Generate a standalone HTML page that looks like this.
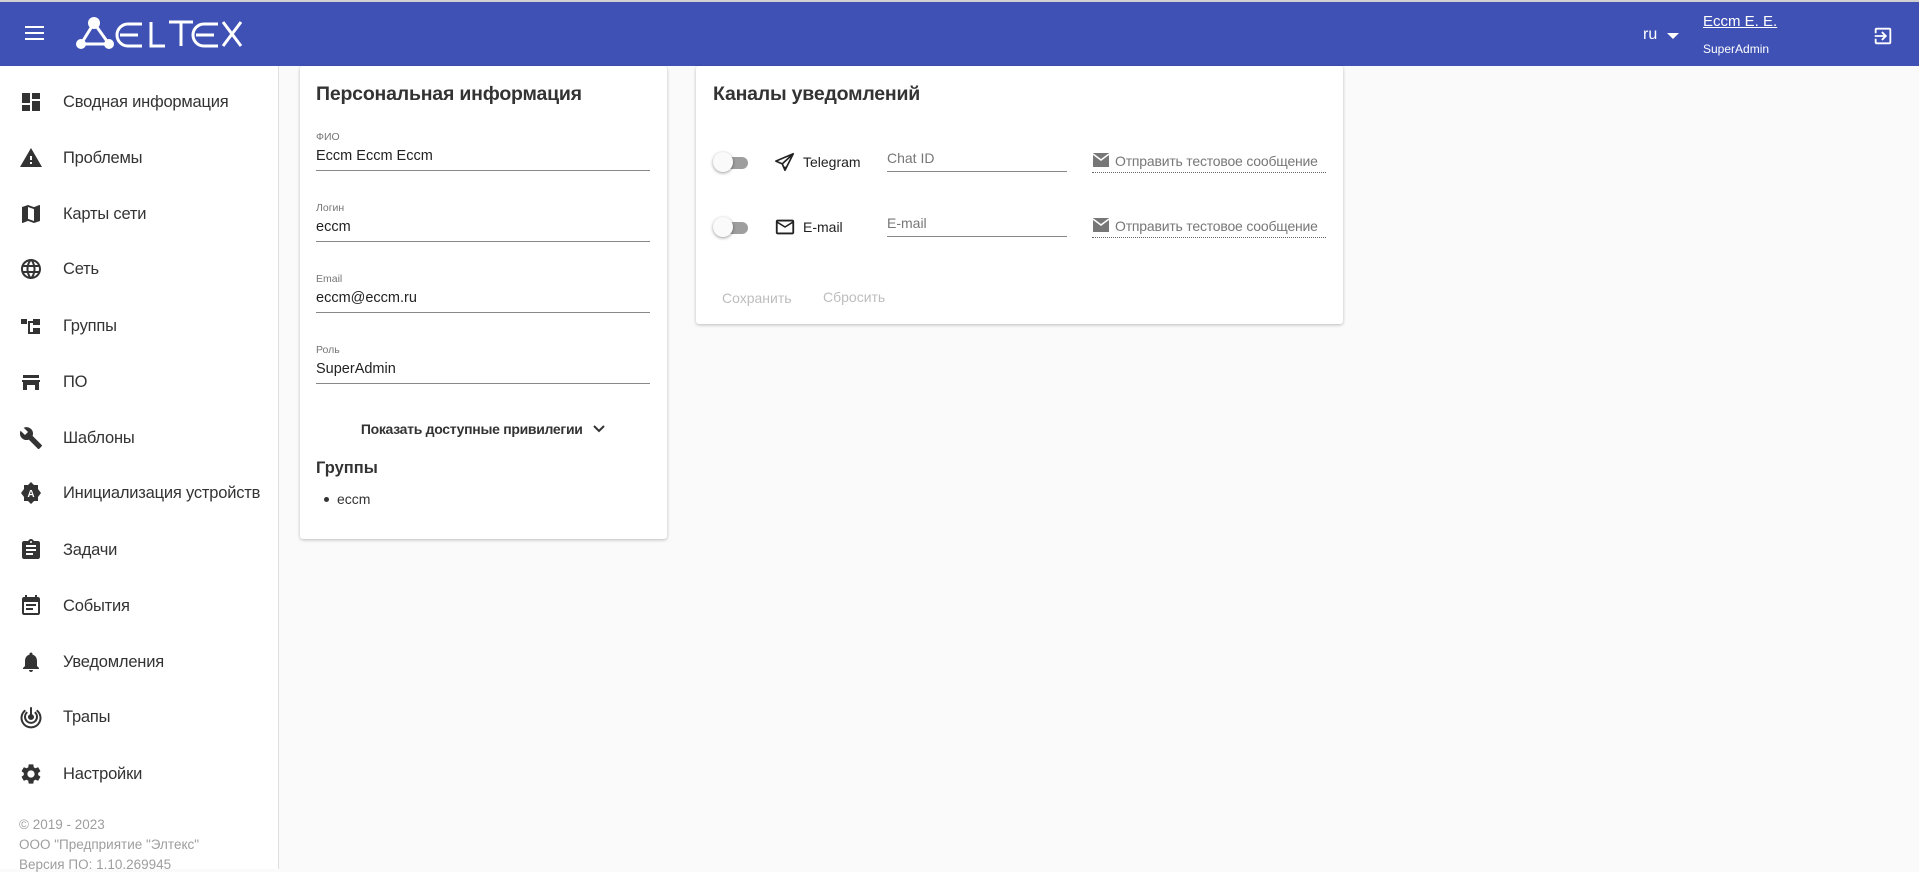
<!DOCTYPE html>
<html><head><meta charset="utf-8"><style>
*{box-sizing:border-box;margin:0;padding:0}
body{width:1919px;height:869px;overflow:hidden;background:#fafafa;font-family:"Liberation Sans",sans-serif;color:#212121;position:relative}
.hdr{position:absolute;left:0;top:0;width:1919px;height:66px;background:#3f51b5;border-top:2px solid #d0d0d0}
.side{position:absolute;left:0;top:66px;width:279px;height:803px;background:#fff;border-right:1px solid #e0e0e0}
.it{position:absolute;left:0;height:40px;width:279px}
.it svg{position:absolute;left:19px;top:8px;width:24px;height:24px;fill:#333}
.it span{position:absolute;left:63px;top:11px;font-size:16.5px;color:#333;letter-spacing:-0.2px}
.foot{position:absolute;left:19px;font-size:13.5px;color:#9e9e9e}
.card{position:absolute;background:#fff;box-shadow:0 1px 3px rgba(0,0,0,.25);border-radius:3px}
.t{position:absolute;font-size:19.5px;font-weight:bold;color:#333;letter-spacing:-0.2px}
.lab{position:absolute;font-size:10.5px;color:#757575}
.val{position:absolute;font-size:14.5px;color:#222}
.ln{position:absolute;height:1px;background:#888}
.a{position:absolute;font-size:14px;color:#777;letter-spacing:-0.2px}
</style></head><body>
<div class="hdr">
<svg style="position:absolute;left:25px;top:23px" width="20" height="16" viewBox="0 0 20 16"><rect y="1" width="19" height="2" fill="#fff"/><rect y="7" width="19" height="2" fill="#fff"/><rect y="13" width="19" height="2" fill="#fff"/></svg>
<svg style="position:absolute;left:76px;top:14px" width="170" height="36" viewBox="0 0 170 36">
<g fill="#fff"><circle cx="18" cy="7" r="6"/><circle cx="5" cy="28" r="5"/><circle cx="33" cy="28" r="5"/></g>
<g stroke="#fff" stroke-width="3" fill="none"><path d="M18 7 L5 28 M18 7 L33 28 M5 28 L33 28"/>
<path d="M66 8 h-14 a11 11 0 0 0 0 22 h14 M44 19 h18"/>
<path d="M75 6 v24 h14"/><path d="M93 6 h24 M105 6 v24"/>
<path d="M142 8 h-14 a11 11 0 0 0 0 22 h14 M120 19 h18"/>
<path d="M147 6 l18 24 M165 6 l-18 24"/></g></svg>
<div style="position:absolute;left:1643px;top:24px;color:#fff;font-size:16px">ru</div>
<svg style="position:absolute;left:1667px;top:31px" width="12" height="7"><path d="M0 0h12L6 6z" fill="#fff"/></svg>
<div style="position:absolute;left:1703px;top:11px;color:#fff;font-size:15px;text-decoration:underline">Eccm E. E.</div>
<div style="position:absolute;left:1703px;top:40px;color:#fff;font-size:12px">SuperAdmin</div>
<svg style="position:absolute;left:1872px;top:23px" width="22" height="22" viewBox="0 0 24 24"><path d="M10.09 15.59L11.5 17l5-5-5-5-1.41 1.41L12.67 11H3v2h9.67l-2.58 2.59zM19 3H5c-1.11 0-2 .9-2 2v4h2V5h14v14H5v-4H3v4c0 1.1.89 2 2 2h14c1.1 0 2-.9 2-2V5c0-1.1-.9-2-2-2z" fill="#fff"/></svg>
</div>
<div class="side">
<div class="it" style="top:16px"><svg viewBox="0 0 24 24"><path d="M3 13h8V3H3v10zm0 8h8v-6H3v6zm10 0h8V11h-8v10zm0-18v6h8V3h-8z"/></svg><span>Сводная информация</span></div>
<div class="it" style="top:72px"><svg viewBox="0 0 24 24"><path d="M1 21h22L12 2 1 21zm12-3h-2v-2h2v2zm0-4h-2v-4h2v4z"/></svg><span>Проблемы</span></div>
<div class="it" style="top:128px"><svg viewBox="0 0 24 24"><path d="M20.5 3l-.16.03L15 5.1 9 3 3.36 4.9c-.21.07-.36.25-.36.48V20.5c0 .28.22.5.5.5l.16-.03L9 18.9l6 2.1 5.640-1.9c.21-.07.36-.25.36-.48V3.5c0-.28-.22-.5-.5-.5zM15 19l-6-2.11V5l6 2.11V19z"/></svg><span>Карты сети</span></div>
<div class="it" style="top:183px"><svg viewBox="0 0 24 24"><path d="M11.99 2C6.47 2 2 6.48 2 12s4.47 10 9.99 10C17.52 22 22 17.52 22 12S17.52 2 11.99 2zm6.93 6h-2.95c-.32-1.25-.78-2.45-1.38-3.56 1.84.63 3.37 1.910 4.33 3.56zM12 4.04c.83 1.2 1.48 2.53 1.91 3.96h-3.82c.43-1.43 1.08-2.76 1.91-3.96zM4.26 14C4.1 13.36 4 12.69 4 12s.1-1.36.26-2h3.38c-.08.66-.14 1.32-.14 2s.06 1.34.14 2H4.26zm.82 2h2.95c.32 1.25.78 2.45 1.38 3.56-1.84-.63-3.37-1.9-4.33-3.56zm2.95-8H5.08c.96-1.66 2.49-2.93 4.33-3.56C8.81 5.55 8.35 6.75 8.03 8zM12 19.96c-.83-1.2-1.48-2.53-1.91-3.96h3.82c-.43 1.43-1.08 2.76-1.91 3.960zM14.34 14H9.66c-.09-.66-.16-1.32-.16-2s.07-1.35.16-2h4.68c.09.65.16 1.32.16 2s-.07 1.34-.16 2zm.25 5.56c.6-1.11 1.06-2.31 1.38-3.56h2.95c-.96 1.65-2.49 2.93-4.33 3.56zM16.36 14c.08-.66.14-1.32.14-2s-.06-1.34-.14-2h3.38c.16.64.26 1.31.26 2s-.1 1.36-.26 2h-3.38z"/></svg><span>Сеть</span></div>
<div class="it" style="top:240px"><svg viewBox="0 0 24 24"><path d="M2 5h6v5H2zM9 7h5v2H11v9h3v2H9zM14 5h7v6h-7zM14 14h7v6h-7z"/></svg><span>Группы</span></div>
<div class="it" style="top:296px"><svg viewBox="0 0 24 24"><path d="M4 5h16v3H4zM3 10h18v2h-1v8h-4v-5H8v5H4v-8H3z"/></svg><span>ПО</span></div>
<div class="it" style="top:352px"><svg viewBox="0 0 24 24"><path d="M22.7 19l-9.1-9.1c.9-2.3.4-5-1.5-6.9-2-2-5-2.4-7.4-1.3L9 6 6 9 1.6 4.7C.4 7.1.9 10.1 2.9 12.1c1.9 1.9 4.6 2.4 6.9 1.5l9.1 9.1c.4.4 1 .4 1.4 0l2.3-2.3c.5-.4.5-1.1.1-1.4z"/></svg><span>Шаблоны</span></div>
<div class="it" style="top:407px"><svg viewBox="0 0 24 24"><path d="M12 1l3 3h4v4l3 4-3 4v4h-4l-3 3-3-3H5v-4l-3-4 3-4V4h4z"/><text x="12" y="16" font-size="10" font-weight="bold" fill="#fff" text-anchor="middle" font-family="Liberation Sans">A</text></svg><span>Инициализация устройств</span></div>
<div class="it" style="top:464px"><svg viewBox="0 0 24 24"><path d="M19 3h-4.18C14.4 1.84 13.3 1 12 1c-1.3 0-2.4.84-2.82 2H5c-1.1 0-2 .9-2 2v14c0 1.1.9 2 2 2h14c1.1 0 2-.9 2-2V5c0-1.1-.9-2-2-2zm-7 0c.55 0 1 .45 1 1s-.45 1-1 1-1-.45-1-1 .45-1 1-1zm2 14H7v-2h7v2zm3-4H7v-2h10v2zm0-4H7V7h10v2z"/></svg><span>Задачи</span></div>
<div class="it" style="top:520px"><svg viewBox="0 0 24 24"><path d="M17 10H7v2h10v-2zm2-7h-1V1h-2v2H8V1H6v2H5c-1.11 0-1.99.9-1.99 2L3 19c0 1.1.89 2 2 2h14c1.1 0 2-.9 2-2V5c0-1.1-.9-2-2-2zm0 16H5V8h14v11zm-5-5H7v2h7v-2z"/></svg><span>События</span></div>
<div class="it" style="top:576px"><svg viewBox="0 0 24 24"><path d="M12 22c1.1 0 2-.9 2-2h-4c0 1.1.89 2 2 2zm6-6v-5c0-3.07-1.64-5.64-4.5-6.32V4c0-.83-.67-1.5-1.5-1.5s-1.5.67-1.5 1.5v.68C7.63 5.36 6 7.92 6 11v5l-2 2v1h16v-1l-2-2z"/></svg><span>Уведомления</span></div>
<div class="it" style="top:631px"><svg viewBox="0 0 24 24"><path d="M12 2a1 1 0 0 1 1 1v6.2a3 3 0 1 1-2 0V3a1 1 0 0 1 1-1zM7.5 6.5l1.4 1.4A5 5 0 1 0 15.1 7.9l1.4-1.4A7 7 0 1 1 7.5 6.5zM5.6 4.6l1.4 1.4A8.5 8.5 0 1 0 17 6l1.4-1.4A10.5 10.5 0 1 1 5.6 4.6z"/></svg><span>Трапы</span></div>
<div class="it" style="top:688px"><svg viewBox="0 0 24 24"><path d="M19.14 12.94c.04-.3.06-.61.06-.94 0-.32-.02-.64-.07-.94l2.03-1.58c.18-.14.23-.41.12-.61l-1.92-3.32c-.12-.22-.37-.29-.59-.22l-2.39.96c-.5-.38-1.03-.7-1.62-.94l-.36-2.54c-.04-.24-.24-.41-.48-.41h-3.84c-.24 0-.43.17-.47.41l-.36 2.54c-.59.24-1.13.57-1.62.94l-2.39-.96c-.22-.08-.47 0-.59.22L2.74 8.87c-.12.21-.08.47.12.61l2.03 1.58c-.05.3-.09.63-.09.94s.02.64.07.94l-2.03 1.58c-.18.14-.23.41-.12.61l1.92 3.32c.12.22.37.29.59.22l2.39-.96c.5.38 1.03.7 1.62.94l.36 2.54c.05.24.24.41.48.41h3.84c.24 0 .44-.17.47-.41l.36-2.54c.59-.24 1.13-.56 1.62-.94l2.39.96c.22.08.47 0 .59-.22l1.920-3.32c.12-.22.07-.47-.12-.61l-2.01-1.58zM12 15.6c-1.98 0-3.6-1.62-3.6-3.6s1.62-3.6 3.6-3.6 3.6 1.62 3.6 3.6-1.62 3.6-3.6 3.6z"/></svg><span>Настройки</span></div>
<div class="foot" style="top:751px">© 2019 - 2023</div>
<div class="foot" style="top:771px">ООО "Предприятие "Элтекс"</div>
<div class="foot" style="top:791px">Версия ПО: 1.10.269945</div>
</div>

<div class="card" style="left:300px;top:66px;width:367px;height:473px">
<div class="t" style="left:16px;top:17px">Персональная информация</div>
<div class="lab" style="left:16px;top:65px">ФИО</div><div class="val" style="left:16px;top:82px">Eccm Eccm Eccm</div><div class="ln" style="left:16px;top:104px;width:334px"></div>
<div class="lab" style="left:16px;top:136px">Логин</div><div class="val" style="left:16px;top:153px">eccm</div><div class="ln" style="left:16px;top:175px;width:334px"></div>
<div class="lab" style="left:16px;top:207px">Email</div><div class="val" style="left:16px;top:224px">eccm@eccm.ru</div><div class="ln" style="left:16px;top:246px;width:334px"></div>
<div class="lab" style="left:16px;top:278px">Роль</div><div class="val" style="left:16px;top:295px">SuperAdmin</div><div class="ln" style="left:16px;top:317px;width:334px"></div>
<div style="position:absolute;left:0;width:367px;top:355px;text-align:center;font-size:14px;font-weight:bold;color:#333;letter-spacing:-0.3px">Показать доступные привилегии <svg style="vertical-align:-1px;margin-left:6px" width="14" height="12" viewBox="0 0 14 12"><path d="M2 3l5 5 5-5" stroke="#333" stroke-width="2" fill="none"/></svg></div>
<div style="position:absolute;left:16px;top:393px;font-size:16.5px;font-weight:bold;color:#333">Группы</div>
<div style="position:absolute;left:24px;top:431px;width:5px;height:5px;border-radius:50%;background:#333"></div>
<div style="position:absolute;left:37px;top:425px;font-size:14px;color:#333">eccm</div>
</div>

<div class="card" style="left:696px;top:66px;width:647px;height:258px">
<div class="t" style="left:17px;top:17px">Каналы уведомлений</div>
<div style="position:absolute;left:20px;top:91px;width:32px;height:12px;border-radius:6px;background:#9e9e9e"></div>
<div style="position:absolute;left:17px;top:86px;width:20px;height:20px;border-radius:50%;background:#fafafa;box-shadow:0 1px 3px rgba(0,0,0,.4)"></div>
<svg style="position:absolute;left:78px;top:85px" width="22" height="22" viewBox="0 0 24 24"><path d="M21 3L2 11l7 3 3 7 9-18zM9 14l12-11M12 21v-4" stroke="#222" stroke-width="1.8" fill="none" stroke-linejoin="round"/></svg>
<div style="position:absolute;left:107px;top:88px;font-size:14px;color:#222">Telegram</div>
<div style="position:absolute;left:191px;top:84px;font-size:14px;color:#777">Chat ID</div>
<div class="ln" style="left:191px;top:105px;width:180px"></div>
<svg style="position:absolute;left:396px;top:86px" width="18" height="16" viewBox="0 0 18 16"><rect x="1" y="1" width="16" height="14" fill="#777"/><path d="M1 2l8 6 8-6" stroke="#fff" stroke-width="1.5" fill="none"/></svg>
<div class="a" style="left:419px;top:87px">Отправить тестовое сообщение</div>
<div style="position:absolute;left:396px;top:106px;width:234px;border-top:1.5px dotted #666"></div>
<div style="position:absolute;left:20px;top:156px;width:32px;height:12px;border-radius:6px;background:#9e9e9e"></div>
<div style="position:absolute;left:17px;top:151px;width:20px;height:20px;border-radius:50%;background:#fafafa;box-shadow:0 1px 3px rgba(0,0,0,.4)"></div>
<svg style="position:absolute;left:78px;top:150px" width="22" height="22" viewBox="0 0 24 24"><path d="M20 4H4c-1.1 0-2 .9-2 2v12c0 1.1.9 2 2 2h16c1.1 0 2-.9 2-2V6c0-1.1-.9-2-2-2zm0 14H4V8l8 5 8-5v10zm-8-7L4 6h16l-8 5z" fill="#222"/></svg>
<div style="position:absolute;left:107px;top:153px;font-size:14px;color:#222">E-mail</div>
<div style="position:absolute;left:191px;top:149px;font-size:14px;color:#777">E-mail</div>
<div class="ln" style="left:191px;top:170px;width:180px"></div>
<svg style="position:absolute;left:396px;top:151px" width="18" height="16" viewBox="0 0 18 16"><rect x="1" y="1" width="16" height="14" fill="#777"/><path d="M1 2l8 6 8-6" stroke="#fff" stroke-width="1.5" fill="none"/></svg>
<div class="a" style="left:419px;top:152px">Отправить тестовое сообщение</div>
<div style="position:absolute;left:396px;top:171px;width:234px;border-top:1.5px dotted #666"></div>
<div style="position:absolute;left:26px;top:224px;font-size:14px;color:#bdbdbd">Сохранить</div>
<div style="position:absolute;left:127px;top:223px;font-size:14px;color:#bdbdbd">Сбросить</div>
</div>
</body></html>
